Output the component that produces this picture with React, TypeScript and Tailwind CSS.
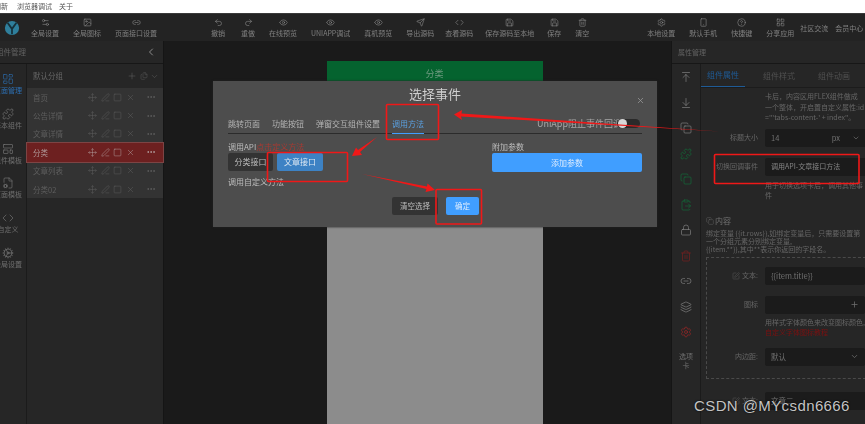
import React from "react";
import {
  Settings2, Image, Link2, Undo2, Redo2, Eye, Send, Code, Save, Trash2, Settings, Smartphone, HelpCircle, LayoutGrid,
  ChevronLeft, ChevronDown, Plus, Move, PenLine, Square, X, MoreHorizontal, LayoutDashboard, Puzzle, LayoutTemplate,
  FileCog, Cog, ArrowUpToLine, ArrowDownToLine, Copy, ClipboardPaste, Lock, Layers, SquarePen, Files,
} from "lucide-react";

const font = "font-['Noto_Sans_CJK_SC','Liberation_Sans',sans-serif]";

function Tool({ icon: I, label, className = "" }: { icon: any; label: string; className?: string }) {
  return (
    <div className={"flex flex-col items-center whitespace-nowrap " + className}>
      <I size={9} strokeWidth={1.5} className="text-[#8f8f8f]" />
      <span className="mt-[2px] text-[7px] leading-[9px] text-[#808080]">{label}</span>
    </div>
  );
}

function Row({ label, active }: { label: string; active?: boolean }) {
  const c = active ? "text-[#b8a8a8]" : "text-[#626262]";
  return (
    <div className={"flex h-[18.4px] items-center pl-[6px] pr-[7px] " + (active ? "bg-[#6d2020] outline outline-1 outline-[#7d4444]" : "")}>
      <span className={"w-[55px] text-[7.5px] " + (active ? "text-[#b09a9a]" : "text-[#5e5e5e]")}>{label}</span>
      <div className={"flex items-center gap-[3.5px] " + c}>
        <Move size={9} strokeWidth={1.2} />
        <PenLine size={9} strokeWidth={1.2} />
        <Square size={9} strokeWidth={1.2} />
        <X size={9} strokeWidth={1.2} />
      </div>
      <MoreHorizontal size={10} className={"ml-auto " + c} />
    </div>
  );
}

function SideItem({ icon: I, label, active }: { icon: any; label: string; active?: boolean }) {
  return (
    <div className="flex h-[22px] w-[36px] flex-col items-center whitespace-nowrap">
      <I size={12} strokeWidth={1.2} className={active ? "text-[#2c6fb3]" : "text-[#7d7d7d]"} />
      <span className={"mt-[1px] text-[7px] leading-[9px] " + (active ? "text-[#2c6fb3]" : "text-[#6f6f6f]")}>{label}</span>
    </div>
  );
}

function Field({ label, icon: I, children, className = "" }: { label: string; icon?: any; children: React.ReactNode; className?: string }) {
  return (
    <div className={"flex h-[18px] items-center " + className}>
      <div className="flex w-[59px] shrink-0 items-center justify-end gap-[2px] pr-[7px] text-[7px] text-[#666]">
        {I && <I size={8} strokeWidth={1.2} />}
        <span className="whitespace-nowrap">{label}</span>
      </div>
      <div className="flex h-full flex-1 items-center rounded-[2px] bg-[#1b1b1b] px-[6px] text-[7.5px] text-[#707070]">{children}</div>
    </div>
  );
}

export default function App() {
  return (
    <div className={"relative h-[424px] w-[865px] overflow-hidden bg-white " + font}>
      <div className="relative flex h-[424px] w-[865px] flex-col blur-[0.45px]">
        {/* menu */}
        <div className="flex h-[13px] shrink-0 items-center bg-white text-[7px] text-[#555]">
          <span className="ml-[-6px]">刷新</span>
          <span className="ml-[9px]">浏览器调试</span>
          <span className="ml-[7px]">关于</span>
        </div>

        {/* toolbar */}
        <div className="flex h-[28px] shrink-0 items-center border-t border-[#3a3a3a] bg-[#232323] pt-[1px]">
          <svg viewBox="0 0 18 18" className="ml-[4px] h-[16px] w-[16px] shrink-0">
            <circle cx="9" cy="9" r="8" fill="#2f7f9c" />
            <path d="M4 3l5 7v6M14 3L9 10" stroke="#16313b" strokeWidth="2" fill="none" />
          </svg>
          <div className="ml-[11px] flex gap-[14px]">
            <Tool icon={Settings2} label="全局设置" />
            <Tool icon={Image} label="全局图标" />
            <Tool icon={Link2} label="页面接口设置" />
          </div>
          <div className="ml-[54px] flex gap-[14px]">
            <Tool icon={Undo2} label="撤销" />
            <Tool icon={Redo2} label="重做" className="ml-[2px]" />
            <Tool icon={Eye} label="在线预览" />
            <Tool icon={Eye} label="UNIAPP调试" />
            <Tool icon={Eye} label="真机预览" />
            <Tool icon={Send} label="导出源码" className="mr-[-3px]" />
            <Tool icon={Code} label="查看源码" />
            <Tool icon={Save} label="保存源码至本地" className="ml-[-2px] mr-[-1px]" />
            <Tool icon={Save} label="保存" />
            <Tool icon={Trash2} label="清空" />
          </div>
          <div className="ml-[58px] flex gap-[14px]">
            <Tool icon={Settings} label="本地设置" />
            <Tool icon={Smartphone} label="默认手机" />
            <Tool icon={HelpCircle} label="快捷键" />
            <Tool icon={LayoutGrid} label="分享应用" />
          </div>
          <span className="ml-[6px] whitespace-nowrap text-[7px] text-[#808080]">社区交流</span>
          <span className="ml-[7px] whitespace-nowrap text-[7px] text-[#808080]">会员中心</span>
        </div>

        {/* body */}
        <div className="flex min-h-0 flex-1 bg-[#1a1a1a]">
          {/* left panel */}
          <div className="flex w-[164px] shrink-0 flex-col border-r border-[#151515] bg-[#262626]">
            <div className="flex h-[23px] shrink-0 items-center justify-between border-b border-[#171717] pr-[6px] text-[7.5px] text-[#626262]">
              <span className="ml-[-4px]">组件管理</span>
              <ChevronLeft size={12} className="text-[#8a8a8a]" />
            </div>
            <div className="flex min-h-0 flex-1">
              <div className="flex w-[27px] shrink-0 flex-col items-center overflow-hidden border-r border-[#1b1b1b] pt-[9px]">
                <div className="ml-[-10px] flex flex-col items-center gap-[12.8px]">
                  <SideItem icon={LayoutDashboard} label="页面管理" active />
                  <SideItem icon={Puzzle} label="基本组件" />
                  <SideItem icon={LayoutTemplate} label="组件模板" />
                  <SideItem icon={FileCog} label="页面模板" />
                  <SideItem icon={Code} label="自定义" />
                  <SideItem icon={Cog} label="全局设置" />
                </div>
              </div>
              <div className="flex-1">
                <div className="flex h-[24px] items-center pl-[6px] pr-[4px] text-[#666]">
                  <span className="text-[7.5px]">默认分组</span>
                  <Plus size={10} strokeWidth={1.2} className="ml-auto" />
                  <Files size={8} strokeWidth={1.2} className="ml-[3px]" />
                  <ChevronDown size={9} strokeWidth={1.2} className="ml-[2px]" />
                </div>
                <div className="bg-[#333333]">
                  <Row label="首页" />
                  <Row label="公告详情" />
                  <Row label="文章详情" />
                  <Row label="分类" active />
                  <Row label="文章列表" />
                  <Row label="分类02" />
                </div>
              </div>
            </div>
          </div>

          {/* canvas */}
          <div className="flex min-w-0 flex-1 justify-center pl-[34px] pt-[20px]">
            <div className="flex w-[216px] flex-col bg-[#8c8c8c]">
              <div className="flex h-[60px] justify-center bg-[#05632f] pt-[6px] text-[9px] text-[#6f9a80]">分类</div>
            </div>
          </div>

          {/* right panel */}
          <div className="flex w-[194px] shrink-0 flex-col border-l border-[#151515] bg-[#262626]">
            <div className="flex h-[23px] shrink-0 items-center border-b border-[#171717] pl-[6px] text-[7px] text-[#626262]">属性管理</div>
            <div className="flex min-h-0 flex-1">
              <div className="flex w-[29px] shrink-0 flex-col items-center gap-[13.5px] border-r border-[#1b1b1b] pt-[7px] text-[#808080]">
                <ArrowUpToLine size={12} strokeWidth={1.4} />
                <ArrowDownToLine size={12} strokeWidth={1.4} />
                <Copy size={12} strokeWidth={1.4} />
                <Puzzle size={12} strokeWidth={1.4} className="text-[#136b3a]" />
                <Copy size={12} strokeWidth={1.4} className="text-[#136b3a]" />
                <ClipboardPaste size={12} strokeWidth={1.4} className="text-[#136b3a]" />
                <Lock size={12} strokeWidth={1.4} />
                <Trash2 size={12} strokeWidth={1.4} className="text-[#7a1f1f]" />
                <Link2 size={12} strokeWidth={1.4} />
                <Layers size={12} strokeWidth={1.4} />
                <Settings size={12} strokeWidth={1.4} className="text-[#9c2525]" />
                <span className="w-[16px] text-center text-[7px] leading-[9px] text-[#707070]">选项卡</span>
              </div>
              <div className="min-w-0 flex-1 overflow-hidden">
                <div className="flex h-[24px] border-b border-[#1c1c1c] text-[8px] text-[#505050]">
                  <span className="flex w-[44px] items-center justify-center border-b border-[#1f5b96] text-[#1f5b96]">组件属性</span>
                  <span className="ml-[18px] flex items-center whitespace-nowrap">组件样式</span>
                  <span className="ml-[23px] flex items-center whitespace-nowrap">组件动画</span>
                </div>
                <div className="w-[165px] pl-[5px]">
                  <div className="ml-[59px] mt-[3px] whitespace-nowrap text-[7px] leading-[10.5px] text-[#666]">
                    卡后，内容区用FLEX组件做成
                    <br />
                    一个整体，开启置自定义属性:id
                    <br />
                    ="'tabs-content-' + index"。
                  </div>
                  <Field label="标题大小" className="mt-[6px]">
                    <span>14</span>
                    <span className="ml-auto">px</span>
                    <ChevronDown size={8} className="ml-[12px]" />
                  </Field>
                  <Field label="切换回调事件" className="mt-[11px]">
                    <span className="whitespace-nowrap text-[7px] text-[#858585]">调用API-文章接口方法</span>
                  </Field>
                  <div className="ml-[59px] mt-[4px] w-[99px] text-[7px] leading-[10px] text-[#666]">用于切换选项卡后，调用其他事件</div>
                  <div className="mt-[15px] flex items-center gap-[1px] text-[8px] text-[#707070]">
                    <Copy size={8} strokeWidth={1.2} />
                    内容
                  </div>
                  <div className="mt-[2px] w-[160px] text-[7px] leading-[8px] text-[#666]">
                    绑定变量 {"{{it.rows}}"},如绑定变量后，只需要设置第一个分组元素分别绑定变量,
                    <br />
                    {"{{item.**}}"},其中**表示你返回的字段名。
                  </div>
                  <div className="mt-[4px] h-[122px] border border-dashed border-[#4a4a4a] pl-[4px] pt-[9px]">
                    <Field label="文本:" icon={SquarePen} className="ml-[-5px]">
                      <span>{"{{item.title}}"}</span>
                    </Field>
                    <Field label="图标" className="ml-[-5px] mt-[11px]">
                      <Plus size={9} className="ml-auto" />
                    </Field>
                    <div className="ml-[54px] mt-[3px] whitespace-nowrap text-[7px] leading-[10px] text-[#666]">
                      用样式字体颜色来改变图标颜色,
                      <br />
                      <span className="text-[#7d1010]">自定义字体图标教程</span>
                    </div>
                    <Field label="内边距:" className="ml-[-5px] mt-[11px]">
                      <span>默认</span>
                      <ChevronDown size={9} className="ml-auto" />
                    </Field>
                  </div>
                  <Field label="文本:" icon={SquarePen} className="mt-[13px]">
                    <span>文章二</span>
                  </Field>
                </div>
              </div>
            </div>
          </div>
        </div>

        {/* modal */}
        <div className="absolute left-[213px] top-[81px] flex h-[146px] w-[444px] flex-col bg-[#4d4d4d] px-[15px] text-[8px] text-[#bdbdbd] shadow-[0_0_2px_#222]">
          <div className="relative pt-[4px] text-center text-[13px] leading-[18px] text-[#cfcfcf]">
            选择事件
            <X size={9} className="absolute right-[-3px] top-[15px] text-[#9a9a9a]" />
          </div>
          <div className="mt-[15px] flex h-[16px] items-start border-b border-[#2b2b2b] text-[8px] leading-[12px] text-[#b4b4b4]">
            <span>跳转页面</span>
            <span className="ml-[12px]">功能按钮</span>
            <span className="ml-[12px]">弹窗交互组件设置</span>
            <span className="ml-[12px] h-[16px] border-b border-[#409eff] text-[#5aa0e0]">调用方法</span>
            <span className="ml-auto whitespace-nowrap pr-[20px] text-[9px] text-[#a8a8a8]">UniApp阻止事件回调</span>
          </div>
          <div className="mt-[8px] flex">
            <div className="w-[264px]">
              <div className="leading-[10px]">
                调用API<span className="text-[#a83a32]">点击定义方法</span>
              </div>
              <div className="mt-[1px] flex gap-[4px]">
                <span className="flex h-[18px] w-[45px] items-center justify-center rounded-[2px] bg-[#333] text-[8px]">分类接口</span>
                <span className="flex h-[18px] w-[46px] items-center justify-center rounded-[2px] bg-[#3d82c4] text-[8px] text-[#dbe7f2]">文章接口</span>
              </div>
              <div className="mt-[6px] leading-[10px]">调用自定义方法</div>
            </div>
            <div className="flex-1">
              <div className="leading-[10px]">附加参数</div>
              <div className="mt-[1px] flex h-[19px] items-center justify-center rounded-[2px] bg-[#409eff] text-[#dcecff]">添加参数</div>
            </div>
          </div>
          <div className="ml-[164px] mt-[10px] flex gap-[8px]">
            <span className="flex h-[18px] w-[46px] items-center justify-center rounded-[2px] bg-[#333] text-[7.5px]">清空选择</span>
            <span className="flex h-[18px] w-[33px] items-center justify-center rounded-[2px] bg-[#409eff] text-[7.5px] text-[#dcecff]">确定</span>
          </div>
          <div className="absolute left-[404px] top-[38px] h-[9px] w-[23px] rounded-full bg-[#2a2a2a]">
            <div className="ml-[1px] h-[9px] w-[9px] rounded-full bg-[#d8d8d8]" />
          </div>
        </div>

        {/* annotations */}
        <svg className="pointer-events-none absolute left-0 top-0" width="865" height="424" viewBox="0 0 865 424">
          <g fill="none" stroke="#f01818" strokeWidth="1.6">
            <rect x="386.5" y="104.5" width="52" height="35" rx="1" />
            <rect x="267.5" y="152.5" width="80" height="29" rx="1" />
            <rect x="436" y="189.5" width="45.5" height="34.5" rx="1" />
            <rect x="714.5" y="154.5" width="144.5" height="29" rx="1" />
          </g>
          <g fill="#f01818">
            <path d="M720 131.5 L461 116.5 L462 120 L454 114.5 L462 110 L461.5 113.5 Z" />
            <path d="M377 137 L360 152 L362 155 L352 156 L356 147.5 L358 150 Z" />
            <path d="M362 174 L427 186.5 L427.5 183.5 L435 190 L425.5 192 L426.5 189 Z" />
          </g>
        </svg>
      </div>

      {/* watermark */}
      <div className="absolute left-[694px] top-[395px] font-['Liberation_Sans',sans-serif] text-[15px] leading-[22px] tracking-[0.4px] text-[#c4c4c4] [text-shadow:0_0_2px_#000]">
        CSDN @MYcsdn6666
      </div>
    </div>
  );
}
